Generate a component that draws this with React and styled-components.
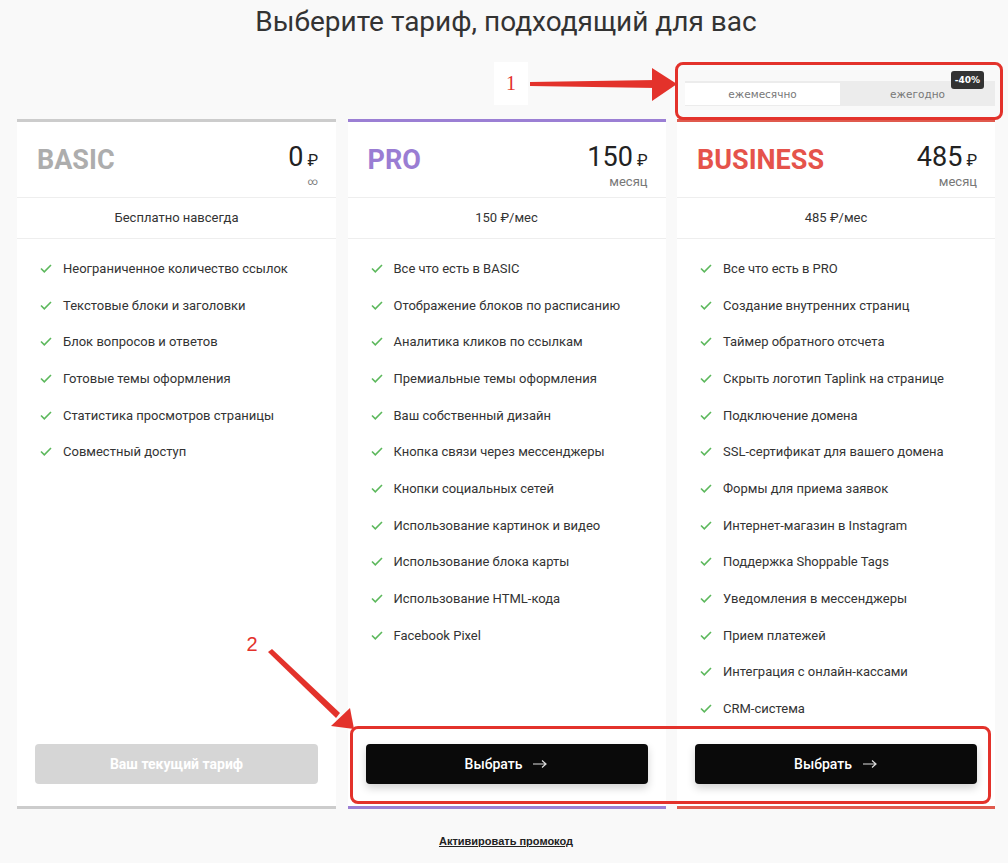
import React, { useState } from 'react';
import styled, { createGlobalStyle } from 'styled-components';

const GlobalStyle = createGlobalStyle`
  body {
    margin: 0;
    background: #f9f9f9;
    font-family: Roboto, "Noto Sans", sans-serif;
    color: #333;
  }
`;

const Page = styled.div`
  position: relative;
  width: 1008px;
  height: 863px;
  padding: 0 13px 0 17px;
  box-sizing: border-box;
`;

const Title = styled.h1`
  margin: 5px 0 0;
  font-size: 28px;
  line-height: 34px;
  font-weight: 400;
  text-align: center;
  color: #333;
`;

const ToggleRow = styled.div`
  display: flex;
  justify-content: flex-end;
  margin-top: 42px;
`;

const Toggle = styled.div`
  position: relative;
  display: flex;
  width: 310px;
  height: 25px;
  padding: 2px 0 1px;
  box-sizing: border-box;
  background: #ececec;
`;

const Tab = styled.button`
  flex: 1;
  border: 0;
  padding: 0;
  background: ${p => (p.active ? '#fff' : 'transparent')};
  font-family: "DejaVu Sans", Verdana, sans-serif;
  font-size: 10.5px;
  color: #777;
  cursor: pointer;
`;

const Badge = styled.span`
  position: absolute;
  top: -10px;
  right: 11px;
  padding: 2px 4px;
  background: #333;
  color: #fff;
  border-radius: 3px;
  font-family: "DejaVu Sans", Verdana, sans-serif;
  font-size: 9px;
  font-weight: 700;
  line-height: 14px;
`;

const Cards = styled.div`
  display: grid;
  grid-template-columns: 319px 318px 318px;
  column-gap: 11.5px;
  margin-top: 13px;
`;

const Card = styled.div`
  display: flex;
  flex-direction: column;
  background: #fff;
  border-top: 3px solid ${p => p.color};
  border-bottom: 3px solid ${p => p.color};
`;

const Header = styled.div`
  display: flex;
  align-items: center;
  justify-content: space-between;
  height: 75px;
  padding: 0 18px 0 20px;
  border-bottom: 1px solid #eee;
`;

const PlanName = styled.div`
  font-size: 27px;
  font-weight: 700;
  color: ${p => p.color};
`;

const Price = styled.div`
  display: flex;
  flex-direction: column;
  align-items: flex-end;
  margin-top: 12px;
`;

const Amount = styled.div`
  display: flex;
  align-items: baseline;
  font-size: 27px;
  line-height: 28px;
  color: #222;
`;

const Currency = styled.span`
  margin-left: 4px;
  font-size: 16px;
`;

const Period = styled.div`
  font-size: ${p => (p.small ? '10px' : '13px')};
  line-height: 13px;
  color: #777;
`;

const Subtitle = styled.div`
  height: 40px;
  line-height: 40px;
  text-align: center;
  font-size: 13px;
  color: #333;
  border-bottom: 1px solid #eee;
`;

const Features = styled.ul`
  flex: 1;
  list-style: none;
  margin: 0;
  padding: 11px 0 17px 23px;
`;

const Feature = styled.li`
  display: flex;
  align-items: center;
  gap: 11px;
  height: 36.7px;
  font-size: 13px;
  color: #333;
`;

const Footer = styled.div`
  padding: 0 18px 22px;
`;

const SelectButton = styled.button`
  display: flex;
  align-items: center;
  justify-content: center;
  gap: 10px;
  width: 100%;
  height: 40px;
  border: 0;
  border-radius: 4px;
  background: ${p => (p.current ? '#d6d6d6' : '#0a0a0a')};
  box-shadow: ${p => (p.current ? 'none' : '0 4px 8px rgba(0,0,0,0.18)')};
  color: #fff;
  font-family: Roboto, sans-serif;
  font-size: 14px;
  font-weight: ${p => (p.current ? 700 : 500)};
  cursor: pointer;
`;

const Promo = styled.a`
  display: block;
  margin-top: 26px;
  text-align: center;
  font-family: "Liberation Sans", Arial, sans-serif;
  font-size: 11px;
  font-weight: 700;
  color: #222;
  text-decoration: underline;
`;

const Frame = styled.div`
  position: absolute;
  left: ${p => p.x}px;
  top: ${p => p.y}px;
  width: ${p => p.w}px;
  height: ${p => p.h}px;
  border: 3px solid #e3322b;
  border-radius: 8px;
  box-sizing: border-box;
  pointer-events: none;
`;

const Label = styled.div`
  position: absolute;
  left: ${p => p.x}px;
  top: ${p => p.y}px;
  width: ${p => p.w}px;
  height: ${p => p.h}px;
  display: flex;
  align-items: center;
  justify-content: center;
  background: ${p => (p.boxed ? '#fff' : 'transparent')};
  color: #e3322b;
  font-family: ${p => (p.serif ? '"Liberation Serif", serif' : '"Liberation Sans", sans-serif')};
  font-size: 20px;
`;

const Overlay = styled.svg`
  position: absolute;
  left: 0;
  top: 0;
  pointer-events: none;
`;

const plans = [
  {
    name: 'BASIC',
    color: '#adadad',
    border: '#cccccc',
    price: '0',
    period: '∞',
    sub: 'Бесплатно навсегда',
    current: true,
    features: [
      'Неограниченное количество ссылок',
      'Текстовые блоки и заголовки',
      'Блок вопросов и ответов',
      'Готовые темы оформления',
      'Статистика просмотров страницы',
      'Совместный доступ',
    ],
  },
  {
    name: 'PRO',
    color: '#9a7dd3',
    border: '#9b7fd4',
    price: '150',
    period: 'месяц',
    sub: '150 ₽/мес',
    features: [
      'Все что есть в BASIC',
      'Отображение блоков по расписанию',
      'Аналитика кликов по ссылкам',
      'Премиальные темы оформления',
      'Ваш собственный дизайн',
      'Кнопка связи через мессенджеры',
      'Кнопки социальных сетей',
      'Использование картинок и видео',
      'Использование блока карты',
      'Использование HTML-кода',
      'Facebook Pixel',
    ],
  },
  {
    name: 'BUSINESS',
    color: '#e5534b',
    border: '#e05a4e',
    price: '485',
    period: 'месяц',
    sub: '485 ₽/мес',
    features: [
      'Все что есть в PRO',
      'Создание внутренних страниц',
      'Таймер обратного отсчета',
      'Скрыть логотип Taplink на странице',
      'Подключение домена',
      'SSL-сертификат для вашего домена',
      'Формы для приема заявок',
      'Интернет-магазин в Instagram',
      'Поддержка Shoppable Tags',
      'Уведомления в мессенджеры',
      'Прием платежей',
      'Интеграция с онлайн-кассами',
      'CRM-система',
    ],
  },
];

const Check = () => (
  <svg width="12" height="9" viewBox="0 0 12 9">
    <path d="M1 4.5 L4.3 7.8 L11 1" fill="none" stroke="#5cb85c" strokeWidth="1.6" />
  </svg>
);

const Arrow = () => (
  <svg width="16" height="10" viewBox="0 0 16 10">
    <path d="M1 5 H14 M10 1.5 L14 5 L10 8.5" fill="none" stroke="#ddd" strokeWidth="1.2" />
  </svg>
);

const App = () => {
  const [period, setPeriod] = useState('month');

  return (
    <Page>
      <GlobalStyle />
      <Title>Выберите тариф, подходящий для вас</Title>
      <ToggleRow>
        <Toggle>
          <Tab active={period === 'month'} onClick={() => setPeriod('month')}>
            ежемесячно
          </Tab>
          <Tab active={period === 'year'} onClick={() => setPeriod('year')}>
            ежегодно
          </Tab>
          <Badge>-40%</Badge>
        </Toggle>
      </ToggleRow>

      <Cards>
        {plans.map(plan => (
          <Card key={plan.name} color={plan.border}>
            <Header>
              <PlanName color={plan.color}>{plan.name}</PlanName>
              <Price>
                <Amount>
                  {plan.price}
                  <Currency>₽</Currency>
                </Amount>
                <Period small={plan.current}>{plan.period}</Period>
              </Price>
            </Header>
            <Subtitle>{plan.sub}</Subtitle>
            <Features>
              {plan.features.map(f => (
                <Feature key={f}>
                  <Check />
                  {f}
                </Feature>
              ))}
            </Features>
            <Footer>
              {plan.current ? (
                <SelectButton current>Ваш текущий тариф</SelectButton>
              ) : (
                <SelectButton>
                  Выбрать <Arrow />
                </SelectButton>
              )}
            </Footer>
          </Card>
        ))}
      </Cards>

      <Promo href="#">Активировать промокод</Promo>

      <Frame x={675} y={57} w={328} h={58} />
      <Frame x={350} y={721} w={641} h={78} />
      <Label boxed serif x={494} y={57} w={34} h={43}>1</Label>
      <Label x={243} y={627} w={18} h={24}>2</Label>

      <Overlay width="1008" height="863">
        <path d="M530 77 L656 75 L656 83 L530 81 Z" fill="#e3322b" />
        <path d="M652 63 L677 79 L652 96 Z" fill="#e3322b" />
        <path d="M268 647 L272 644 L340 708 L336 713 Z" fill="#e3322b" />
        <path d="M350 703 L354 724 L331 721 Z" fill="#e3322b" />
      </Overlay>
    </Page>
  );
};

export default App;
